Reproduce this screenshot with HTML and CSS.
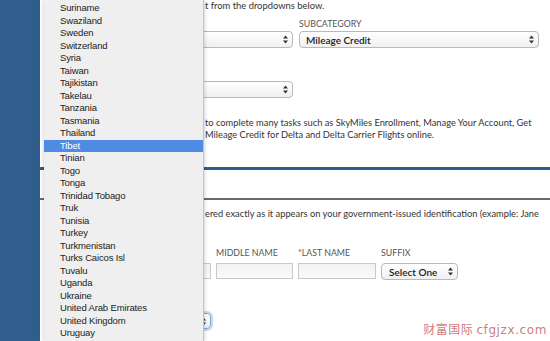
FILE: index.html
```html
<!DOCTYPE html>
<html lang="en">
<head>
<meta charset="utf-8">
<title>Contact Form</title>
<link rel="stylesheet" href="styles.css">
</head>
<body>
<div class="sidebar"></div>
<main class="main">
  <section class="section">
    <p class="intro cut">t from the dropdowns below.</p>
    <div class="grid2">
      <div class="field">
        <span class="lbl"></span>
        <div class="select"><span></span><svg viewBox="0 0 5 9"><path d="M0 3.6 2.5 0.4 5 3.6Z M0 5.4 2.5 8.6 5 5.4Z"/></svg></div>
      </div>
      <div class="field">
        <span class="lbl">Subcategory</span>
        <div class="select"><span>Mileage Credit</span><svg viewBox="0 0 5 9"><path d="M0 3.6 2.5 0.4 5 3.6Z M0 5.4 2.5 8.6 5 5.4Z"/></svg></div>
      </div>
    </div>
    <div class="field single">
      <span class="lbl"></span>
      <div class="select"><span></span><svg viewBox="0 0 5 9"><path d="M0 3.6 2.5 0.4 5 3.6Z M0 5.4 2.5 8.6 5 5.4Z"/></svg></div>
    </div>
    <p class="para cut">to complete many tasks such as SkyMiles Enrollment, Manage Your Account, Get<br>Mileage Credit for Delta and Delta Carrier Flights online.</p>
  </section>
  <div class="rule-blue"></div>
  <div class="rule-gray"></div>
  <section class="section">
    <p class="note cut">ered exactly as it appears on your government-issued identification (example: Jane</p>
    <div class="name-row">
      <div class="field">
        <span class="lbl"></span>
        <div class="select"><span></span><svg viewBox="0 0 5 9"><path d="M0 3.6 2.5 0.4 5 3.6Z M0 5.4 2.5 8.6 5 5.4Z"/></svg></div>
      </div>
      <div class="field">
        <span class="lbl"></span>
        <div class="input"></div>
      </div>
      <div class="field">
        <span class="lbl">Middle Name</span>
        <div class="input"></div>
      </div>
      <div class="field">
        <span class="lbl">*Last Name</span>
        <div class="input"></div>
      </div>
      <div class="field">
        <span class="lbl">Suffix</span>
        <div class="select select-sm"><span>Select One</span><svg viewBox="0 0 5 9"><path d="M0 3.6 2.5 0.4 5 3.6Z M0 5.4 2.5 8.6 5 5.4Z"/></svg></div>
      </div>
    </div>
    <div class="country-row">
      <div class="select"><span></span><svg viewBox="0 0 5 9"><path d="M0 3.6 2.5 0.4 5 3.6Z M0 5.4 2.5 8.6 5 5.4Z"/></svg></div>
      <div class="select focused"><span></span><svg viewBox="0 0 5 9"><path d="M0 3.6 2.5 0.4 5 3.6Z M0 5.4 2.5 8.6 5 5.4Z"/></svg></div>
    </div>
  </section>
</main>
<ul class="dropdown">
  <li>Suriname</li>
  <li>Swaziland</li>
  <li>Sweden</li>
  <li>Switzerland</li>
  <li>Syria</li>
  <li>Taiwan</li>
  <li>Tajikistan</li>
  <li>Takelau</li>
  <li>Tanzania</li>
  <li>Tasmania</li>
  <li>Thailand</li>
  <li class="sel">Tibet</li>
  <li>Tinian</li>
  <li>Togo</li>
  <li>Tonga</li>
  <li>Trinidad Tobago</li>
  <li>Truk</li>
  <li>Tunisia</li>
  <li>Turkey</li>
  <li>Turkmenistan</li>
  <li>Turks Caicos Isl</li>
  <li>Tuvalu</li>
  <li>Uganda</li>
  <li>Ukraine</li>
  <li>United Arab Emirates</li>
  <li>United Kingdom</li>
  <li>Uruguay</li>
</ul>
<div class="watermark"><span class="wm-cn">财富国际</span> <span class="wm-en">cfgjzx.com</span></div>
</body>
</html>
```
FILE: styles.css
```css
* { box-sizing: border-box; }
html, body { margin: 0; padding: 0; }
body {
  width: 550px;
  height: 341px;
  overflow: hidden;
  display: flex;
  position: relative;
  background: #ffffff;
  font-family: Lato, "Open Sans", sans-serif;
  color: #333333;
}
.sidebar {
  flex: 0 0 40px;
  background: #2f5e8d;
}
.main {
  flex: 1;
  display: flex;
  flex-direction: column;
}
.section {
  padding: 0 11px 0 15px;
}
.cut {
  padding-left: 150px;
  white-space: nowrap;
}
.intro {
  margin: 0;
  height: 11px;
  line-height: 11px;
  font-size: 9.4px;
}
.grid2 {
  display: grid;
  grid-template-columns: 238px 240px;
  column-gap: 6px;
  margin-top: 7px;
}
.field { display: flex; flex-direction: column; }
.lbl {
  display: block;
  height: 11px;
  line-height: 11px;
  font-size: 8.8px;
  color: #555555;
  text-transform: uppercase;
  white-space: nowrap;
}
.select {
  height: 17px;
  margin-top: 2px;
  border: 1px solid #b9b9b9;
  border-radius: 4px;
  background: linear-gradient(#ffffff, #f0f0f0);
  display: flex;
  align-items: center;
  justify-content: space-between;
  padding: 0 4px 0 6px;
  font-size: 10px;
  font-weight: 600;
  color: #222222;
}
.select svg { width: 5px; height: 9px; fill: #333333; flex: none; }
.single { width: 238px; margin-top: 20px; }
.para {
  margin: 19px 0 0;
  font-size: 9.3px;
  line-height: 12px;
}
.rule-blue {
  height: 3px;
  background: #2f5e8d;
  margin-top: 26px;
}
.rule-gray {
  height: 2px;
  background: #6b6b6b;
  margin-top: 28px;
}
.note {
  margin: 8px 0 0;
  font-size: 9.3px;
  line-height: 12px;
}
.name-row {
  display: grid;
  grid-template-columns: 73px 78px 77px 78px 77px;
  column-gap: 5px;
  margin-top: 27px;
}
.input {
  height: 16px;
  margin-top: 5px;
  border: 1px solid #c9c9c9;
  background: linear-gradient(#f2f2f2, #fafafa);
}
.select-sm { margin-top: 5px; padding-left: 7px; }
.country-row {
  display: grid;
  grid-template-columns: 73px 78px;
  column-gap: 5px;
  margin-top: 31px;
}
.country-row .select { height: 16px; }
.focused {
  border-color: #7ea6d6;
  box-shadow: 0 0 0 2px rgba(125, 170, 225, 0.45);
}
.dropdown {
  position: absolute;
  left: 44px;
  top: 0;
  width: 160px;
  height: 341px;
  margin: 0;
  padding: 2px 0 0;
  list-style: none;
  background: #efefef;
  border-right: 1px solid #c4c4c4;
  box-shadow: 0 0 4px rgba(0, 0, 0, 0.25);
  font-family: "Liberation Sans", Arial, sans-serif;
  font-size: 9.5px;
  letter-spacing: -0.15px;
  color: #222222;
}
.dropdown li {
  height: 12.5px;
  line-height: 12.5px;
  padding-left: 16px;
  white-space: nowrap;
}
.dropdown li.sel {
  background: #4f8ae3;
  color: #ffffff;
}
.watermark {
  position: absolute;
  right: 3px;
  bottom: 4px;
  font-size: 12px;
  line-height: 14px;
  color: rgba(195, 85, 85, 0.8);
  white-space: nowrap;
}
.wm-cn { font-family: "Noto Sans CJK SC", sans-serif; letter-spacing: 0.5px; }
.wm-en { font-family: "DejaVu Sans", sans-serif; letter-spacing: 0.6px; }
```
